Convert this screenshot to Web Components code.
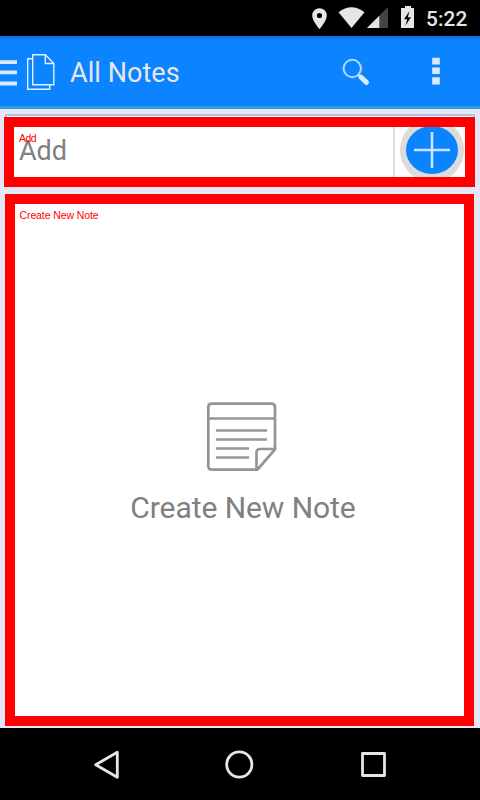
<!DOCTYPE html>
<html lang="en"><head><meta charset="utf-8"><title>All Notes</title>
<style>
html,body{margin:0;height:100%}
body{font-family:Roboto,"Liberation Sans",sans-serif;background:#e6e6fa;overflow:hidden}
</style></head><body>
<notes-app></notes-app>
<script>
const define=(name,html)=>customElements.define(name,class extends HTMLElement{
  constructor(){super();const t=document.createElement('template');t.innerHTML=html;
    this.attachShadow({mode:'open'}).append(t.content.cloneNode(true));}
});
define('status-bar',`<style>
:host{display:flex;height:36px;background:#000;color:#e6e6e6;justify-content:flex-end;box-sizing:border-box;padding-right:12px}
svg{display:block;flex:none;width:114px;height:36px;margin-right:12px}
span{font:500 20.8px/38px Roboto,sans-serif;width:42px;white-space:nowrap;letter-spacing:.15px}
</style>
<svg viewBox="300 0 114 36"><path fill="#e6e6e6" fill-rule="evenodd" d="M319.5 8.2a7.3 7.3 0 0 0-7.3 7.3c0 5.400 7.300 13.500 7.300 13.500s7.300-8.100 7.300-13.500a7.300 7.300 0 0 0-7.300-7.300zm0 4.700a2.600 2.600 0 1 1 0 5.200 2.600 2.600 0 0 1 0-5.200z"/>
<path fill="#e6e6e6" d="M338.500 12.200Q351.500 2.500 364.500 12.200L351.500 28z"/>
<path fill="#444" d="M388 7v21h-21z"/><path fill="#e6e6e6" d="M379.300 15.700V28H367z"/>
<path fill="#e6e6e6" d="M405 6h6v2h4v20h-14V8h4z"/><path fill="#000" d="M409.500 11l-5.500 8.300h3.300l-2 6.500 5.700-8.500h-3.200z"/></svg>
<span>5:22</span>`);
define('action-bar',`<style>
:host{display:flex;align-items:center;height:73px;box-sizing:border-box;border-bottom:3px solid #339fd8;background:linear-gradient(#0a70d6,#0a80f4 3px,#0c84ff 7px);color:#e6e6e6}
svg{display:block;flex:none;height:70px}
h1{font:400 27px/70px Roboto,sans-serif;margin:3px 0 0 10px;white-space:nowrap;letter-spacing:.05px;flex:1}
</style>
<svg width="60" viewBox="0 36 60 70"><g fill="#d8eaff"><path d="M0 60.300h17v3.700H0zM0 70.500h17v3.800H0zM0 81.500h17v4H0z"/></g>
<g fill="none" stroke="#e2f0ff" stroke-width="1.400"><path d="M32.500 58.700h-4.800v30.600h22v-4.500"/><path d="M32.700 54.700h12.600l8.500 8.800v21.300H32.700z"/><path d="M45.300 54.700v8.800h8.500"/></g></svg>
<h1><slot></slot></h1>
<svg width="140" viewBox="340 36 140 70"><circle cx="352.300" cy="68.500" r="8.700" fill="none" stroke="#b4d8ff" stroke-width="2"/><path d="M358.200 74.500l2.500 2.500" stroke="#c4e0ff" stroke-width="2.500"/><path d="M361 77.200l5.500 5.200" stroke="#d8eaff" stroke-width="5" stroke-linecap="round"/>
<path fill="#d8eaff" d="M432.200 57.700h7.600v6.700h-7.600zM432.200 67.500h7.600v6.600h-7.600zM432.200 77.300h7.600v7.200h-7.600z"/></svg>`);
define('marked-box',`<style>
:host{display:block;position:relative;box-sizing:border-box;border:10px solid #f00;background:#fff;overflow:hidden}
.tag{position:absolute;left:var(--tag-x,5px);top:5px;color:#f00;font:10.500px/13px "Liberation Sans",sans-serif;white-space:nowrap;letter-spacing:var(--tag-gap,-.1px)}
</style><slot></slot><div class="tag"><slot name="tag"></slot></div>`);
define('add-field',`<style>
:host{display:flex;height:50px;color:#808080}
.input{flex:none;width:379px;box-sizing:border-box;padding-left:5px;font:27px/48px Roboto,sans-serif}
svg{display:block;flex:none}
</style><div class="input"><slot></slot></div>
<svg width="72" height="50" viewBox="393 127 72 50"><path fill="#dcdcdc" d="M393 127h2v50h-2z"/><circle cx="432" cy="150" r="32" fill="#dcdcdc"/><ellipse cx="432" cy="150" rx="26" ry="24" fill="#0c84ff"/><path fill="none" stroke="#cde4ff" stroke-width="2.600" d="M414 150h36M432 132v36"/></svg>`);
define('empty-notes',`<style>
:host{display:flex;flex-direction:column;align-items:center;height:100%;box-sizing:border-box;padding-top:196px;color:#808080}
svg{display:block;flex:none;margin-left:4px}
p{margin:16px 0 0 7px;font:30px/36px Roboto,sans-serif;white-space:nowrap;letter-spacing:-.06px}
</style>
<svg width="74" height="74" viewBox="205 400 74 74" fill="none" stroke="#959595" stroke-width="2.700"><path d="M258 469.700h-46q-3.700 0-3.700-3.700v-58.700q0-3.700 3.700-3.700h59.300q3.700 0 3.700 3.700v42.200L257.500 469.500M208.300 418.500H275"/><path d="M256.500 469v-16.500q0-3.500 3.500-3.500h15"/><path d="M216 430.500h51M216 439.500h51M216 448.500h33M216 457.500h33"/></svg>
<p><slot></slot></p>`);
define('nav-bar',`<style>:host{display:flex;height:72px;background:#000;justify-content:center}svg{display:block}</style>
<svg width="480" height="72" viewBox="0 728 480 72" fill="none" stroke="#e6e6e6" stroke-width="2.800" stroke-linejoin="round"><path d="M117.300 752.300v25L95.700 764.800z"/><circle cx="239.300" cy="764.500" r="12.600"/><path d="M362.500 753.500h22v22h-22z"/></svg>`);
define('notes-app',`<style>
:host{display:flex;flex-direction:column;width:480px;height:800px;background:#e6e6fa}
main{flex:1;min-height:0;display:flex;flex-direction:column;padding-top:5px}
.rim{height:3px;margin:0 5px;box-sizing:border-box;border:2px solid #b0c4de;border-bottom:0;background:#fff}
.add{height:70px;width:471px;margin-left:4px;--tag-gap:-.5px}
.list{height:532px;width:469px;margin:7px 0 0 5px;--tag-x:4.500px}
</style>
<status-bar></status-bar><action-bar>All Notes</action-bar>
<main><div class="rim"></div>
<marked-box class="add"><span slot="tag">Add</span><add-field>Add</add-field></marked-box>
<marked-box class="list"><span slot="tag">Create New Note</span><empty-notes>Create New Note</empty-notes></marked-box></main>
<nav-bar></nav-bar>`);
</script></body></html>
